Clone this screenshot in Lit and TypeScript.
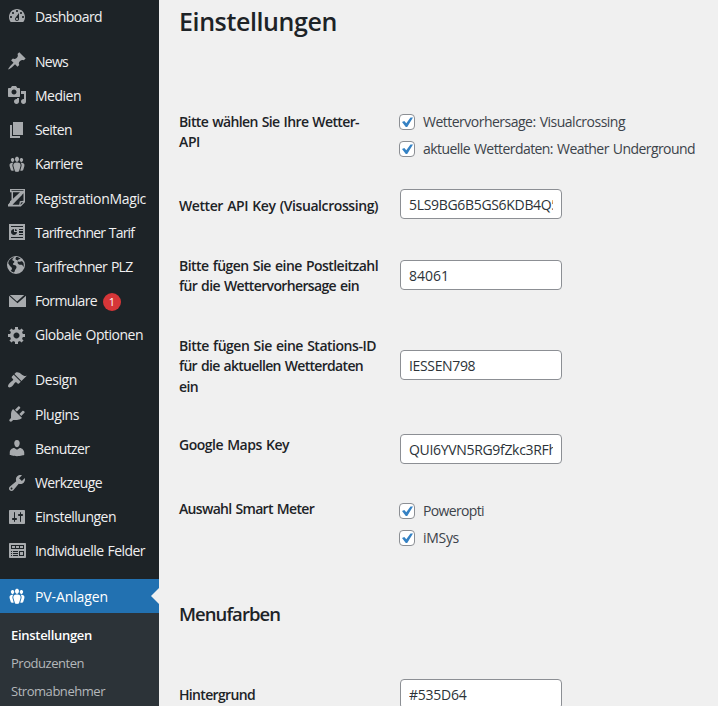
import { LitElement, html, css, svg, nothing } from "lit";
import { customElement, property } from "lit/decorators.js";
import { classMap } from "lit/directives/class-map.js";

const GROUPS =
  "M8.03 4.46c-.29 1.28.55 3.46 1.97 3.46 1.41 0 2.25-2.18 1.96-3.46-.22-.98-1.08-1.63-1.96-1.63-.89 0-1.74.65-1.97 1.63zm-4.13.9c-.25 1.08.47 2.93 1.67 2.93s1.92-1.85 1.67-2.93c-.19-.83-.92-1.39-1.67-1.39s-1.48.56-1.67 1.39zm8.86 0c-.25 1.08.47 2.93 1.66 2.93 1.2 0 1.92-1.85 1.67-2.93-.19-.83-.92-1.39-1.67-1.39-.74 0-1.47.56-1.66 1.39zm-.59 11.43l1.25-4.3C14.2 10 12.71 8.47 10 8.47c-2.72 0-4.21 1.53-3.44 4.02l1.26 4.3C8.05 17.51 9 18 10 18c.98 0 1.94-.49 2.17-1.21zm-6.1-7.63c-.49.67-.96 1.83-.42 3.59l1.12 3.79c-.34.2-.77.31-1.2.31-.85 0-1.65-.41-1.85-1.03l-1.07-3.65c-.65-2.11.61-3.4 2.92-3.4.27 0 .54.02.79.06-.1.1-.2.22-.29.33zm8.35-.39c2.31 0 3.58 1.29 2.92 3.4l-1.07 3.65c-.2.62-1 1.03-1.85 1.03-.43 0-.86-.11-1.2-.31l1.11-3.77c.55-1.78.08-2.94-.42-3.61-.08-.11-.18-.23-.28-.33.25-.04.51-.06.79-.06z";

const ICONS: Record<string, string> = {
  dashboard:
    "M3.76 16h12.48c1.1-1.37 1.76-3.11 1.76-5 0-4.42-3.58-8-8-8s-8 3.58-8 8c0 1.89.66 3.63 1.76 5zM10 4c.55 0 1 .45 1 1s-.45 1-1 1-1-.45-1-1 .45-1 1-1zM6 6c.55 0 1 .45 1 1s-.45 1-1 1-1-.45-1-1 .45-1 1-1zm8 0c.55 0 1 .45 1 1s-.45 1-1 1-1-.45-1-1 .45-1 1-1zm-5.37 5.55L12 7v6c0 1.1-.9 2-2 2s-2-.9-2-2c0-.57.24-1.08.63-1.45zM4 10c.55 0 1 .45 1 1s-.45 1-1 1-1-.45-1-1 .45-1 1-1zm12 0c.55 0 1 .45 1 1s-.45 1-1 1-1-.45-1-1 .45-1 1-1zm-5 3c0-.55-.45-1-1-1s-1 .45-1 1 .45 1 1 1 1-.45 1-1z",
  pin: "M10.44 3.02l1.82-1.82 6.36 6.35-1.83 1.82c-1.05-.68-2.48-.57-3.41.36l-.75.75c-.92.93-1.04 2.35-.35 3.41l-1.83 1.82-2.41-2.41-2.8 2.79c-.42.42-3.38 2.71-3.8 2.29s1.86-3.39 2.28-3.81l2.79-2.79L4.1 9.36l1.83-1.82c1.05.69 2.48.57 3.4-.36l.75-.75c.93-.92 1.05-2.35.36-3.41z",
  media:
    "M13 11V4c0-.55-.45-1-1-1h-1.67L9 1H5L3.67 3H2c-.55 0-1 .45-1 1v7c0 .55.45 1 1 1h10c.55 0 1-.45 1-1zM7 4.5c1.38 0 2.5 1.12 2.5 2.5S8.38 9.5 7 9.5 4.5 8.38 4.5 7 5.62 4.5 7 4.5zM14 6h5v10.5c0 1.38-1.12 2.5-2.5 2.5S14 17.88 14 16.5s1.12-2.5 2.5-2.5c.17 0 .34.02.5.05V9h-3V6zm-4 8.05V13h2v3.5c0 1.38-1.12 2.5-2.5 2.5S7 17.88 7 16.5 8.12 14 9.5 14c.17 0 .34.02.5.05z",
  page: "M6 15V2h10v13H6zm-1 1h8v2H3V5h2v11z",
  groups: GROUPS,
  magic:
    "M3 1H18V14.200L13.800 18.500H1V16.500L3 14.800V13.200L4.500 12V4.200H3zM4.500 2.300V3h12V2.300zM6 4.200V10.800L13 4.200zM16.500 5.300L5.500 16.800H12.200L12.800 13.200 16.500 12.800zM13.900 14.500L13.500 17 16.300 14.200z",
  analytics:
    "M18 18V2H2v16h16zM16 5H4V4h12v1zM7 7v3h3c0 1.66-1.34 3-3 3s-3-1.34-3-3 1.34-3 3-3zm1 2V7c1.1 0 2 .9 2 2H8zm8-1h-4V7h4v1zm0 3h-4V9h4v2zm0 2h-4v-1h4v1zm0 3H4v-1h12v1z",
  globe:
    "M9 0a9 9 0 1 0 0 18A9 9 0 0 0 9 0zM7.200 1.200C6.200 2.200 5.200 2.600 5.400 3.900c.2 1.100 1.500.6 1.900 1.600.3 1-.6 1.300-1.200 2-.5.700 0 1.400.9 1.600 1.200.2 2.600.700 2.500 2.300-.1 1.200-1.400 1.800-1.600 3-.1.900-.5 1.700-1.100 2.200-1.200-.4-2.300-1.100-3.200-1.900 1-.5 1.600-1.500 1.300-2.600-.3-1-1.300-1.200-1.900-2.100-.600-1-1-1.900-1.700-2.600C1.400 4.300 3.900 1.900 7.200 1.200zM9.200 1.100c1.700 0 3.300.6 4.500 1.600-1 .1-2.300.5-2.700 1.500-.3 1 .5 1.500 1.500 1.600.9.100 1.400-.8 2.300-.6.9.200 1.200 1 1.700 1.700.3 1.300.4 2.700.1 4-.6-.6-.6-1.600-1.500-2-1-.4-2.200.300-3.100-.5-.8-.7-1.600-1-1.400-2.100.1-.8.7-1.100.1-1.900-.6-.7-1.800-.2-2.100-1.200-.2-.8.200-1.400.6-2.100z",
  mail: "M2.8 4h14.400L10 10.400zM2 4.800V16h17V4.800l-8.500 7.500z",
  gear: "M18 12h-2.18c-.17.7-.44 1.35-.81 1.93l1.54 1.54-2.1 2.1-1.54-1.54c-.58.36-1.23.63-1.91.79V19H8v-2.18c-.68-.16-1.33-.43-1.91-.79l-1.54 1.54-2.12-2.12 1.54-1.54c-.36-.58-.63-1.23-.79-1.91H1V9.03h2.17c.16-.7.44-1.35.8-1.94L2.43 5.55l2.1-2.1 1.54 1.54c.58-.37 1.24-.64 1.93-.81V2h3v2.18c.68.16 1.33.43 1.91.79l1.54-1.54 2.12 2.12-1.54 1.54c.36.59.64 1.24.8 1.94H18V12zm-8.5 1.500c1.660 0 3-1.340 3-3s-1.340-3-3-3-3 1.340-3 3 1.340 3 3 3z",
  brush:
    "M14.48 11.06L7.41 3.99l1.5-1.5c.5-.56 2.3-.47 3.51.32 1.21.8 1.43 1.28 2.91 2.1 1.18.64 2.45 1.26 4.45.85zm-.71.71L6.7 4.7 4.93 6.47c-.39.39-.39 1.02 0 1.41l1.06 1.06c.39.39.39 1.03 0 1.42-.6.6-1.43 1.11-2.21 1.69-.35.26-.7.53-1.01.84C1.43 14.23.4 16.08 1.4 17.07c.99 1 2.84-.03 4.18-1.36.31-.31.58-.66.85-1.02.57-.78 1.08-1.61 1.69-2.21.39-.39 1.02-.39 1.41 0l1.06 1.06c.39.39 1.02.39 1.41 0z",
  plug: "M13.11 4.36L9.87 7.6 8 5.73l3.24-3.24c.35-.34 1.05-.2 1.56.32.52.51.66 1.21.31 1.55zm-8 1.77l.91-1.12 9.01 9.01-1.19.84c-.71.71-2.63 1.16-3.82 1.16H6.14L4.9 17.26c-.59.59-1.54.59-2.12 0-.59-.58-.59-1.53 0-2.12l1.24-1.24v-3.88c0-1.13.4-3.19 1.09-3.89zm7.26 3.97l3.24-3.24c.34-.35 1.04-.21 1.55.31.52.51.66 1.21.31 1.55l-3.24 3.25z",
  user: "M10 9.25c-2.27 0-2.73-3.44-2.73-3.44C7 4.02 7.82 2 9.97 2c2.16 0 2.98 2.02 2.71 3.81 0 0-.41 3.44-2.68 3.44zm0 2.57L12.72 10c2.39 0 4.52 2.33 4.52 4.53v2.49s-3.65 1.13-7.24 1.13c-3.65 0-7.24-1.13-7.24-1.13v-2.49c0-2.25 1.94-4.48 4.47-4.48z",
  wrench:
    "M16.68 9.77c-1.34 1.34-3.3 1.67-4.95.99l-5.41 6.52c-.99.99-2.59.99-3.58 0s-.99-2.59 0-3.57l6.52-5.42c-.68-1.65-.35-3.61.99-4.95 1.28-1.28 3.12-1.62 4.72-1.06l-2.89 2.89 2.82 2.82 2.86-2.87c.53 1.58.18 3.39-1.08 4.65zM3.81 16.21c.4.39 1.04.39 1.43 0 .4-.4.4-1.04 0-1.43-.39-.4-1.03-.4-1.43 0-.39.39-.39 1.03 0 1.43z",
  sliders:
    "M18 16V4c0-.55-.45-1-1-1H3c-.55 0-1 .45-1 1v12c0 .55.45 1 1 1h14c.55 0 1-.45 1-1zM8 11h1c.55 0 1 .45 1 1s-.45 1-1 1H8v1.500c0 .28-.22.5-.5.5s-.5-.22-.5-.5V13H6c-.55 0-1-.45-1-1s.45-1 1-1h1V5.500c0-.28.22-.5.5-.5s.5.22.5.5V11zm5-2h-1c-.55 0-1-.45-1-1s.45-1 1-1h1V5.500c0-.28.22-.5.5-.5s.5.22.5.5V7h1c.55 0 1 .45 1 1s-.45 1-1 1h-1v5.500c0 .28-.22.5-.5.5s-.5-.22-.5-.5V9z",
  fields:
    "M19 16V3c0-.55-.45-1-1-1H3c-.55 0-1 .45-1 1v13c0 .55.45 1 1 1h15c.55 0 1-.45 1-1zM4 4h13v4H4V4zm1 1v2h3V5H5zm4 0v2h3V5H9zm4 0v2h3V5h-3zM4 10h1v1H4zM6 10h5v1H6zM12 10h5v5h-5zM13 11v3h3v-3zM4 12h1v1H4zM6 12h5v1H6zM4 14h1v1H4zM6 14h5v1H6z",
};

interface Item {
  icon: string;
  text: string;
  width: number;
  badge?: string;
  gap?: boolean;
  active?: boolean;
}

const MENU: Item[] = [
  { icon: "dashboard", text: "Dashboard", width: 67 },
  { icon: "pin", text: "News", width: 33, gap: true },
  { icon: "media", text: "Medien", width: 46 },
  { icon: "page", text: "Seiten", width: 37 },
  { icon: "groups", text: "Karriere", width: 47.500 },
  { icon: "magic", text: "RegistrationMagic", width: 111 },
  { icon: "analytics", text: "Tarifrechner Tarif", width: 99 },
  { icon: "globe", text: "Tarifrechner PLZ", width: 97.500 },
  { icon: "mail", text: "Formulare", width: 62, badge: "1" },
  { icon: "gear", text: "Globale Optionen", width: 108 },
  { icon: "brush", text: "Design", width: 42, gap: true },
  { icon: "plug", text: "Plugins", width: 44 },
  { icon: "user", text: "Benutzer", width: 54.500 },
  { icon: "wrench", text: "Werkzeuge", width: 67 },
  { icon: "sliders", text: "Einstellungen", width: 81 },
  { icon: "fields", text: "Individuelle Felder", width: 110 },
  { icon: "groups", text: "PV-Anlagen", width: 73, gap: true, active: true },
];

/** One line of text whose tracking is adjusted so that it fills a given width. */
@customElement("fit-text")
export class FitText extends LitElement {
  @property() text = "";
  @property({ type: Number }) width = 0;

  static styles = css`
    :host {
      display: block;
      white-space: nowrap;
      word-spacing: 1px;
    }
  `;

  updated() {
    const line = this.renderRoot.querySelector("span")!;
    line.style.letterSpacing = "0";
    const natural = line.getBoundingClientRect().width;
    line.style.letterSpacing = `${(this.width - natural) / this.text.length}px`;
  }

  render() {
    return html`<span>${this.text}</span>`;
  }
}

@customElement("admin-menu")
export class AdminMenu extends LitElement {
  static styles = css`
    :host {
      display: block;
      width: 159px;
      flex: none;
      background: #1d2327;
      color: #f0f0f1;
      font-size: 14px;
      overflow: hidden;
    }
    nav {
      margin-top: -1px;
    }
    .row {
      display: flex;
      align-items: center;
      height: 34.2px;
      padding-left: 7px;
    }
    .gap {
      margin-top: 11px;
    }
    svg {
      flex: none;
      width: 20px;
      height: 20px;
      margin-right: 8px;
      fill: #a7aaad;
      fill-rule: evenodd;
    }
    .active {
      position: relative;
      height: 34px;
      background: #2271b1;
      color: #fff;
    }
    .active svg {
      fill: #fff;
    }
    .active::after {
      content: "";
      position: absolute;
      right: 0;
      top: 9px;
      border: 8px solid transparent;
      border-left: 0;
      border-right-color: #f0f0f0;
    }
    .badge {
      width: 18px;
      height: 18px;
      margin: 2px 0 0 6px;
      border-radius: 9px;
      background: #d63638;
      color: #fff;
      font-size: 11px;
      line-height: 18px;
      text-align: center;
    }
    .sub {
      height: 200px;
      padding: 8px 0 0 11px;
      background: #2c3338;
      color: #b4b8bb;
      font-size: 13px;
      line-height: 28px;
    }
    .current {
      color: #fff;
      font-weight: 600;
    }
  `;

  row(i: Item) {
    return html`<div class=${classMap({ row: true, gap: !!i.gap, active: !!i.active })}>
      <svg viewBox="0 0 20 20">
        ${svg`<path d=${ICONS[i.icon]}></path>`}
        ${i.icon === "magic"
          ? svg`<path d="M2.600 14.800L12.800 5.200l2 1.800L5 16.200l-3.200 1.100z"></path>`
          : nothing}
      </svg>
      <fit-text .text=${i.text} .width=${i.width}></fit-text>
      ${i.badge ? html`<span class="badge">${i.badge}</span>` : nothing}
    </div>`;
  }

  render() {
    return html`<nav>
      ${MENU.map((i) => this.row(i))}
      <div class="sub">
        <fit-text class="current" .text=${"Einstellungen"} .width=${81}></fit-text>
        <fit-text .text=${"Produzenten"} .width=${73}></fit-text>
        <fit-text .text=${"Stromabnehmer"} .width=${94}></fit-text>
      </div>
    </nav>`;
  }
}

type Line = [text: string, width: number];

interface Field {
  label: Line[];
  height: number;
  pad: number;
  value?: string;
  tracking?: number;
  checks?: Line[];
}

const FIELDS: Field[] = [
  {
    label: [["Bitte wählen Sie Ihre Wetter-", 180], ["API", 21]],
    height: 84,
    pad: 16.500,
    checks: [["Wettervorhersage: Visualcrossing", 202], ["aktuelle Wetterdaten: Weather Underground", 272]],
  },
  { label: [["Wetter API Key (Visualcrossing)", 199]], height: 60, pad: 13, value: "5LS9BG6B5GS6KDB4Q5", tracking: -0.32 },
  {
    label: [["Bitte fügen Sie eine Postleitzahl", 199], ["für die Wettervorhersage ein", 180]],
    height: 80,
    pad: 24,
    value: "84061",
  },
  {
    label: [["Bitte fügen Sie eine Stations-ID", 197], ["für die aktuellen Wetterdaten", 184], ["ein", 19]],
    height: 99,
    pad: 34,
    value: "IESSEN798",
    tracking: -0.35,
  },
  { label: [["Google Maps Key", 110]], height: 64, pad: 19, value: "QUI6YVN5RG9fZkc3RFh", tracking: -0.32 },
  { label: [["Auswahl Smart Meter", 135]], height: 93, pad: 18.500, checks: [["Poweropti", 61], ["iMSys", 36]] },
];

const COLORS: Field[] = [
  { label: [["Hintergrund", 76]], height: 60, pad: 14, value: "#535D64", tracking: -0.25 },
];

@customElement("settings-form")
export class SettingsForm extends LitElement {
  static styles = css`
    :host {
      display: block;
      flex: 1;
      padding: 5px 0 0 20px;
      color: #1d2327;
      font-size: 14px;
    }
    h1,
    h2 {
      margin: 0;
      font-weight: 600;
    }
    h1 {
      height: 87px;
      font-size: 25px;
      line-height: 32px;
    }
    h2 {
      height: 93px;
      padding-top: 29px;
      box-sizing: border-box;
      font-size: 18.500px;
      line-height: 26px;
    }
    .field {
      display: grid;
      grid-template-columns: 220px 1fr;
    }
    .label {
      padding-top: 20px;
      font-weight: 600;
      line-height: 20.400px;
    }
    .control {
      color: #3c434a;
    }
    input {
      display: block;
      box-sizing: border-box;
      width: 162px;
      height: 30px;
      margin-left: 1px;
      padding: 0 8px;
      border: 1px solid #8c8f94;
      border-radius: 4px;
      background: #fff;
      color: #2c3338;
      font: inherit;
    }
    .check {
      display: flex;
      align-items: center;
      gap: 8px;
      height: 27px;
    }
    .check fit-text {
      margin-top: -2px;
    }
    .box {
      box-sizing: border-box;
      width: 16px;
      height: 16px;
      border: 1px solid #8c8f94;
      border-radius: 4px;
      background: #fff;
    }
    .box svg {
      display: block;
      width: 14px;
      height: 14px;
      fill: #3582c4;
    }
  `;

  field(f: Field) {
    return html`<div class="field" style="height:${f.height}px">
      <div class="label">
        ${f.label.map(([t, w]) => html`<fit-text .text=${t} .width=${w}></fit-text>`)}
      </div>
      <div class="control" style="padding-top:${f.pad}px">
        ${f.checks
          ? f.checks.map(
              ([t, w]) => html`<div class="check">
                <span class="box"
                  ><svg viewBox="0 0 14 14">
                    <path d="M2 7L4.300 5.900 6.300 8.200 10.500 2.500 13 2.500 7.200 11.900 5.800 11.900z"></path></svg
                ></span>
                <fit-text .text=${t} .width=${w}></fit-text>
              </div>`
            )
          : html`<input type="text" .value=${f.value ?? ""} style="letter-spacing:${f.tracking ?? 0}px" />`}
      </div>
    </div>`;
  }

  render() {
    return html`
      <h1><fit-text .text=${"Einstellungen"} .width=${158}></fit-text></h1>
      ${FIELDS.map((f) => this.field(f))}
      <h2><fit-text .text=${"Menufarben"} .width=${101}></fit-text></h2>
      ${COLORS.map((f) => this.field(f))}
    `;
  }
}

@customElement("app-root")
export class AppRoot extends LitElement {
  static styles = css`
    :host {
      display: flex;
      height: 706px;
      overflow: hidden;
      background: #f0f0f0;
      font-family: "Open Sans", "Noto Sans", sans-serif;
    }
  `;

  render() {
    return html`<admin-menu></admin-menu><settings-form></settings-form>`;
  }
}
